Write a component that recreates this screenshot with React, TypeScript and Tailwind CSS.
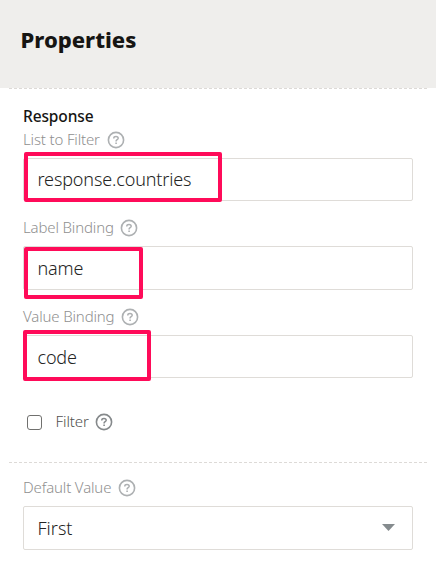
import type { ReactNode } from "react";

function Help({ className = "" }: { className?: string }) {
  return (
    <svg className={`size-[18px] shrink-0 ${className}`} viewBox="0 0 18 18" fill="none" stroke="currentColor">
      <circle cx="9" cy="9" r="7.6" strokeWidth="1.6" />
      <path d="M6.8 7.4V7.1C6.8 5.9 7.7 5.4 9 5.4s2.2.7 2.2 1.8c0 1.5-2.1 1.5-2.1 2.9v.3" strokeWidth="1.5" />
      <path d="M9.1 11.5v1.6" strokeWidth="1.6" />
    </svg>
  );
}

function Label({ text, width, className = "" }: { text: string; width: string; className?: string }) {
  return (
    <div className={`flex h-6 items-center text-[#8f8f8f] ${className}`}>
      <span className={`pb-[2px] text-[15px] leading-6 font-light tracking-[-0.15px] whitespace-nowrap ${width}`}>{text}</span>
      <Help className="text-[#adb0b2]" />
    </div>
  );
}

function Field({ children, mark, className = "" }: { children: ReactNode; mark?: string; className?: string }) {
  return (
    <div className={`relative flex items-center justify-between rounded-[2px] border border-[#dfdcd8] bg-white pr-[17px] pl-[13.5px] text-[18px] leading-6 text-[#242423] ${className}`}>
      {children}
      {mark && <div className={`absolute rounded-[2px] border-4 border-[#ff0b59] ${mark}`} />}
    </div>
  );
}

export default function App() {
  return (
    <main className="h-[561px] w-[436px] overflow-hidden bg-white font-['Noto_Sans','Open_Sans',sans-serif]">
      <header className="h-[88px] bg-[#efeeec] pt-[23px] pl-[20.5px]">
        <h1 className="text-[22px] leading-8 font-extrabold text-[#161513]">Properties</h1>
      </header>
      <Divider />
      <section className="pt-[16px] pr-[23px] pl-[23px]">
        <h2 className="h-[23px] text-[15.5px] leading-[23px] font-medium tracking-[-0.12px] text-[#161513]">Response</h2>
        <Label text="List to Filter" width="w-[84px]" />
        <Field className="mt-[6px] h-[43px]" mark="-top-[7px] left-0 h-[50px] w-[198px]">
          <span className="pb-px font-light tracking-[-0.14px]">response.countries</span>
        </Field>
        <Label text="Label Binding" width="w-[97px]" className="mt-[15px]" />
        <Field className="mt-[6px] h-[44px]" mark="top-0 left-0 h-[52px] w-[119px]">
          <span className="font-light tracking-[-0.16px]">name</span>
        </Field>
        <Label text="Value Binding" width="w-[98px]" className="mt-[15px]" />
        <Field className="mt-[6px] h-[43px]" mark="-top-[6px] -left-px h-[51px] w-[128px]">
          <span className="font-light tracking-[-0.16px]">code</span>
        </Field>
        <div className="mt-[32px] flex h-6 items-center pl-1">
          <div className="size-[15px] rounded-[3px] border border-[#70706e]" />
          <span className="ml-[13.5px] w-[39.5px] pb-[3px] text-[15px] leading-6 font-light tracking-[-0.1px] text-[#50504e]">Filter</span>
          <Help className="text-[#85898b]" />
        </div>
      </section>
      <Divider className="mt-[28px]" />
      <section className="px-[23px] pt-[13px]">
        <Label text="Default Value" width="w-[94.5px]" />
        <Field className="mt-[6px] h-[44px]">
          <span className="font-light">First</span>
          <svg className="mb-px h-[7px] w-[13px]" viewBox="0 0 13 7"><path d="M0 0h13L6.5 7z" fill="#858b8e" /></svg>
        </Field>
      </section>
    </main>
  );
}

function Divider({ className = "" }: { className?: string }) {
  return <div className={`mx-[9px] h-px bg-[repeating-linear-gradient(to_right,#dddad7_0_3px,transparent_3px_5px)] ${className}`} />;
}
